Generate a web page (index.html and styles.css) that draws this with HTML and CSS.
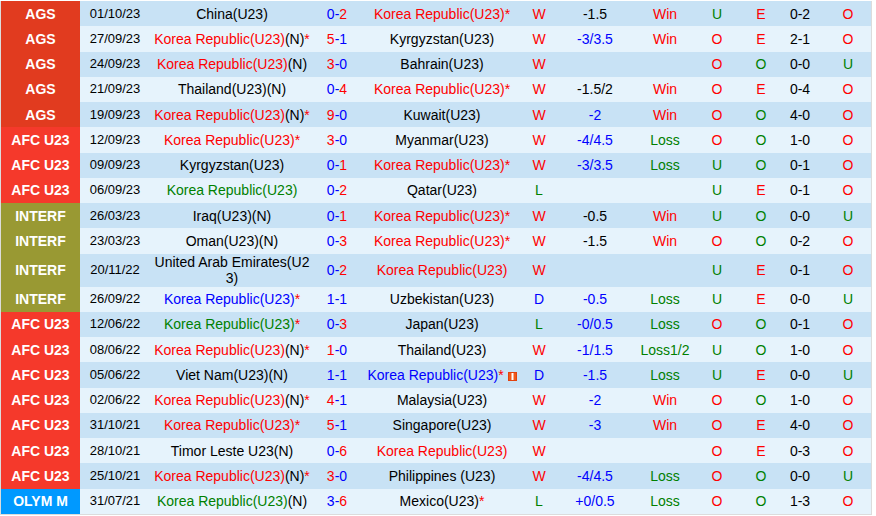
FILE: index.html
```html
<!DOCTYPE html>
<html lang="en">
<head>
<meta charset="utf-8">
<title>Korea Republic U23 – recent matches</title>
<link rel="stylesheet" href="styles.css">
</head>
<body>
<table class="matches">
  <colgroup>
    <col class="c-league"><col class="c-date"><col class="c-team"><col class="c-score"><col class="c-team"><col class="c-res"><col class="c-hcp"><col class="c-wl"><col class="c-uo"><col class="c-eo"><col class="c-ht"><col class="c-last">
  </colgroup>
  <tbody>
    <tr class="dark">
      <td class="lg ags">AGS</td><td class="date">01/10/23</td>
      <td class="team">China(U23)</td>
      <td class="score"><span class="blue">0</span>-<span class="red">2</span></td>
      <td class="team"><span class="red">Korea Republic(U23)</span><span class="ast">*</span></td>
      <td class="red">W</td><td>-1.5</td><td class="red">Win</td><td class="green">U</td><td class="red">E</td><td>0-2</td><td class="last red">O</td>
    </tr>
    <tr class="light">
      <td class="lg ags">AGS</td><td class="date">27/09/23</td>
      <td class="team"><span class="red">Korea Republic(U23)</span>(N)<span class="ast">*</span></td>
      <td class="score"><span class="red">5</span>-<span class="blue">1</span></td>
      <td class="team">Kyrgyzstan(U23)</td>
      <td class="red">W</td><td class="blue">-3/3.5</td><td class="red">Win</td><td class="red">O</td><td class="red">E</td><td>2-1</td><td class="last red">O</td>
    </tr>
    <tr class="dark">
      <td class="lg ags">AGS</td><td class="date">24/09/23</td>
      <td class="team"><span class="red">Korea Republic(U23)</span>(N)</td>
      <td class="score"><span class="red">3</span>-<span class="blue">0</span></td>
      <td class="team">Bahrain(U23)</td>
      <td class="red">W</td><td></td><td></td><td class="red">O</td><td class="green">O</td><td>0-0</td><td class="last green">U</td>
    </tr>
    <tr class="light">
      <td class="lg ags">AGS</td><td class="date">21/09/23</td>
      <td class="team">Thailand(U23)(N)</td>
      <td class="score"><span class="blue">0</span>-<span class="red">4</span></td>
      <td class="team"><span class="red">Korea Republic(U23)</span><span class="ast">*</span></td>
      <td class="red">W</td><td>-1.5/2</td><td class="red">Win</td><td class="red">O</td><td class="red">E</td><td>0-4</td><td class="last red">O</td>
    </tr>
    <tr class="dark">
      <td class="lg ags">AGS</td><td class="date">19/09/23</td>
      <td class="team"><span class="red">Korea Republic(U23)</span>(N)<span class="ast">*</span></td>
      <td class="score"><span class="red">9</span>-<span class="blue">0</span></td>
      <td class="team">Kuwait(U23)</td>
      <td class="red">W</td><td class="blue">-2</td><td class="red">Win</td><td class="red">O</td><td class="green">O</td><td>4-0</td><td class="last red">O</td>
    </tr>
    <tr class="light">
      <td class="lg afc">AFC U23</td><td class="date">12/09/23</td>
      <td class="team"><span class="red">Korea Republic(U23)</span><span class="ast">*</span></td>
      <td class="score"><span class="red">3</span>-<span class="blue">0</span></td>
      <td class="team">Myanmar(U23)</td>
      <td class="red">W</td><td class="blue">-4/4.5</td><td class="green">Loss</td><td class="red">O</td><td class="green">O</td><td>1-0</td><td class="last red">O</td>
    </tr>
    <tr class="dark">
      <td class="lg afc">AFC U23</td><td class="date">09/09/23</td>
      <td class="team">Kyrgyzstan(U23)</td>
      <td class="score"><span class="blue">0</span>-<span class="red">1</span></td>
      <td class="team"><span class="red">Korea Republic(U23)</span><span class="ast">*</span></td>
      <td class="red">W</td><td class="blue">-3/3.5</td><td class="green">Loss</td><td class="green">U</td><td class="green">O</td><td>0-1</td><td class="last red">O</td>
    </tr>
    <tr class="light">
      <td class="lg afc">AFC U23</td><td class="date">06/09/23</td>
      <td class="team"><span class="green">Korea Republic(U23)</span></td>
      <td class="score"><span class="blue">0</span>-<span class="red">2</span></td>
      <td class="team">Qatar(U23)</td>
      <td class="green">L</td><td></td><td></td><td class="green">U</td><td class="red">E</td><td>0-1</td><td class="last red">O</td>
    </tr>
    <tr class="dark">
      <td class="lg interf">INTERF</td><td class="date">26/03/23</td>
      <td class="team">Iraq(U23)(N)</td>
      <td class="score"><span class="blue">0</span>-<span class="red">1</span></td>
      <td class="team"><span class="red">Korea Republic(U23)</span><span class="ast">*</span></td>
      <td class="red">W</td><td>-0.5</td><td class="red">Win</td><td class="green">U</td><td class="green">O</td><td>0-0</td><td class="last green">U</td>
    </tr>
    <tr class="light">
      <td class="lg interf">INTERF</td><td class="date">23/03/23</td>
      <td class="team">Oman(U23)(N)</td>
      <td class="score"><span class="blue">0</span>-<span class="red">3</span></td>
      <td class="team"><span class="red">Korea Republic(U23)</span><span class="ast">*</span></td>
      <td class="red">W</td><td>-1.5</td><td class="red">Win</td><td class="red">O</td><td class="green">O</td><td>0-2</td><td class="last red">O</td>
    </tr>
    <tr class="dark tall">
      <td class="lg interf">INTERF</td><td class="date">20/11/22</td>
      <td class="team">United Arab Emirates(U23)</td>
      <td class="score"><span class="blue">0</span>-<span class="red">2</span></td>
      <td class="team"><span class="red">Korea Republic(U23)</span></td>
      <td class="red">W</td><td></td><td></td><td class="green">U</td><td class="red">E</td><td>0-1</td><td class="last red">O</td>
    </tr>
    <tr class="light">
      <td class="lg interf">INTERF</td><td class="date">26/09/22</td>
      <td class="team"><span class="blue">Korea Republic(U23)</span><span class="ast">*</span></td>
      <td class="score"><span class="blue">1</span>-<span class="blue">1</span></td>
      <td class="team">Uzbekistan(U23)</td>
      <td class="blue">D</td><td class="blue">-0.5</td><td class="green">Loss</td><td class="green">U</td><td class="red">E</td><td>0-0</td><td class="last green">U</td>
    </tr>
    <tr class="dark">
      <td class="lg afc">AFC U23</td><td class="date">12/06/22</td>
      <td class="team"><span class="green">Korea Republic(U23)</span><span class="ast">*</span></td>
      <td class="score"><span class="blue">0</span>-<span class="red">3</span></td>
      <td class="team">Japan(U23)</td>
      <td class="green">L</td><td class="blue">-0/0.5</td><td class="green">Loss</td><td class="red">O</td><td class="green">O</td><td>0-1</td><td class="last red">O</td>
    </tr>
    <tr class="light">
      <td class="lg afc">AFC U23</td><td class="date">08/06/22</td>
      <td class="team"><span class="red">Korea Republic(U23)</span>(N)<span class="ast">*</span></td>
      <td class="score"><span class="red">1</span>-<span class="blue">0</span></td>
      <td class="team">Thailand(U23)</td>
      <td class="red">W</td><td class="blue">-1/1.5</td><td class="green">Loss1/2</td><td class="green">U</td><td class="green">O</td><td>1-0</td><td class="last red">O</td>
    </tr>
    <tr class="dark">
      <td class="lg afc">AFC U23</td><td class="date">05/06/22</td>
      <td class="team">Viet Nam(U23)(N)</td>
      <td class="score"><span class="blue">1</span>-<span class="blue">1</span></td>
      <td class="team"><span class="blue">Korea Republic(U23)</span><span class="ast">*</span> <svg class="card" width="9" height="9" viewBox="0 0 9 9" aria-hidden="true"><rect width="9" height="9" fill="#e2420e"/><rect x="1" y="1" width="7" height="7" fill="#f05a1a"/><rect x="3.5" y="1" width="2" height="7" fill="#fff"/></svg></td>
      <td class="blue">D</td><td class="blue">-1.5</td><td class="green">Loss</td><td class="green">U</td><td class="red">E</td><td>0-0</td><td class="last green">U</td>
    </tr>
    <tr class="light">
      <td class="lg afc">AFC U23</td><td class="date">02/06/22</td>
      <td class="team"><span class="red">Korea Republic(U23)</span>(N)<span class="ast">*</span></td>
      <td class="score"><span class="red">4</span>-<span class="blue">1</span></td>
      <td class="team">Malaysia(U23)</td>
      <td class="red">W</td><td class="blue">-2</td><td class="red">Win</td><td class="red">O</td><td class="green">O</td><td>1-0</td><td class="last red">O</td>
    </tr>
    <tr class="dark">
      <td class="lg afc">AFC U23</td><td class="date">31/10/21</td>
      <td class="team"><span class="red">Korea Republic(U23)</span><span class="ast">*</span></td>
      <td class="score"><span class="red">5</span>-<span class="blue">1</span></td>
      <td class="team">Singapore(U23)</td>
      <td class="red">W</td><td class="blue">-3</td><td class="red">Win</td><td class="red">O</td><td class="red">E</td><td>4-0</td><td class="last red">O</td>
    </tr>
    <tr class="light">
      <td class="lg afc">AFC U23</td><td class="date">28/10/21</td>
      <td class="team">Timor Leste U23(N)</td>
      <td class="score"><span class="blue">0</span>-<span class="red">6</span></td>
      <td class="team"><span class="red">Korea Republic(U23)</span></td>
      <td class="red">W</td><td></td><td></td><td class="red">O</td><td class="red">E</td><td>0-3</td><td class="last red">O</td>
    </tr>
    <tr class="dark">
      <td class="lg afc">AFC U23</td><td class="date">25/10/21</td>
      <td class="team"><span class="red">Korea Republic(U23)</span>(N)<span class="ast">*</span></td>
      <td class="score"><span class="red">3</span>-<span class="blue">0</span></td>
      <td class="team">Philippines (U23)</td>
      <td class="red">W</td><td class="blue">-4/4.5</td><td class="green">Loss</td><td class="red">O</td><td class="green">O</td><td>0-0</td><td class="last green">U</td>
    </tr>
    <tr class="light">
      <td class="lg olym">OLYM M</td><td class="date">31/07/21</td>
      <td class="team"><span class="green">Korea Republic(U23)</span>(N)</td>
      <td class="score"><span class="blue">3</span>-<span class="red">6</span></td>
      <td class="team">Mexico(U23)<span class="ast">*</span></td>
      <td class="green">L</td><td class="blue">+0/0.5</td><td class="green">Loss</td><td class="red">O</td><td class="green">O</td><td>1-3</td><td class="last red">O</td>
    </tr>
  </tbody>
</table>
</body>
</html>
```

FILE: styles.css
```css
html, body {
  margin: 0;
  background: #ffffff;
}

body {
  padding-top: 1px;
  font-family: "Liberation Sans", Arial, sans-serif;
  color: #000;
}

.matches {
  width: 872px;
  table-layout: fixed;
  border-collapse: separate;
  border-spacing: 0;
  border-left: 1px solid #dcdcdc;
  border-right: 1px solid #dcdcdc;
  border-bottom: 1px solid #dcdcdc;
}

.c-league { width: 79px; }
.c-date { width: 70px; }
.c-team { width: 164px; }
.c-score { width: 46px; }
.c-res { width: 30px; }
.c-hcp { width: 82px; }
.c-wl { width: 58px; }
.c-uo { width: 46px; }
.c-eo { width: 42px; }
.c-ht { width: 36px; }
.c-last { width: 53px; }

.matches tr { height: 25.25px; }
.matches tr.tall { height: 33px; }

.matches td {
  padding: 0;
  text-align: center;
  vertical-align: middle;
  font-size: 14px;
  line-height: 16px;
  word-break: break-all;
}

.dark td { background: #c8e2f5; }
.light td { background: #e6f3fc; }

.matches td.lg {
  color: #fff;
  font-weight: bold;
  font-size: 14px;
}
.dark td.ags, .light td.ags { background: #e13b1f; }
.dark td.afc, .light td.afc { background: #f5392b; }
.dark td.interf, .light td.interf { background: #999933; }
.dark td.olym, .light td.olym { background: #0099ff; }

.matches td.date { font-size: 13px; }
.matches td.team { padding: 0 3px; }
.matches td.score { color: #0000ff; }
.matches td.last { padding-left: 7px; }

.red { color: #ff0000; }
.blue { color: #0000ff; }
.green { color: #008000; }
.ast { color: #ff0000; }

.card {
  vertical-align: -1px;
}
```
